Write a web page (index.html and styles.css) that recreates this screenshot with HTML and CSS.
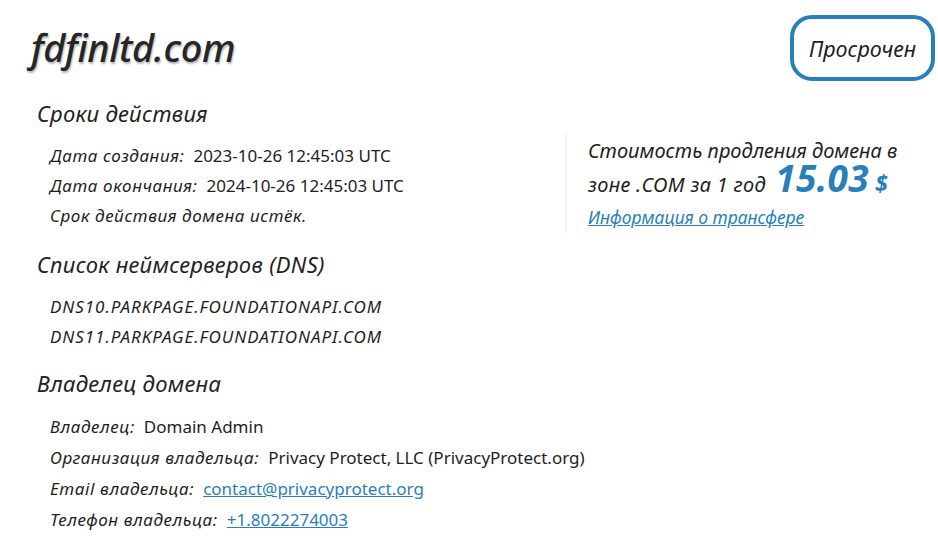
FILE: index.html
```html
<!DOCTYPE html>
<html lang="ru">
<head>
<meta charset="utf-8">
<title>fdfinltd.com</title>
<link rel="stylesheet" href="styles.css">
</head>
<body>
<div class="page">
  <header class="top">
    <h1 class="domain">fdfinltd.com</h1>
    <div class="badge">Просрочен</div>
  </header>
  <div class="main">
    <div class="left">
      <section class="sec">
        <h2 class="heading">Сроки действия</h2>
        <div class="rows">
          <div class="row"><span class="label">Дата создания:</span><span class="value">2023-10-26 12:45:03 UTC</span></div>
          <div class="row"><span class="label">Дата окончания:</span><span class="value">2024-10-26 12:45:03 UTC</span></div>
          <div class="row"><span class="label">Срок действия домена истёк.</span></div>
        </div>
      </section>
      <section class="sec">
        <h2 class="heading">Список неймсерверов (DNS)</h2>
        <div class="rows">
          <div class="row"><span class="label dns">DNS10.PARKPAGE.FOUNDATIONAPI.COM</span></div>
          <div class="row"><span class="label dns">DNS11.PARKPAGE.FOUNDATIONAPI.COM</span></div>
        </div>
      </section>
      <section class="sec">
        <h2 class="heading">Владелец домена</h2>
        <div class="rows owner">
          <div class="row"><span class="label">Владелец:</span><span class="value">Domain Admin</span></div>
          <div class="row"><span class="label">Организация владельца:</span><span class="value">Privacy Protect, LLC (PrivacyProtect.org)</span></div>
          <div class="row"><span class="label">Email владельца:</span><a class="value link" href="#">contact@privacyprotect.org</a></div>
          <div class="row"><span class="label">Телефон владельца:</span><a class="value link" href="#">+1.8022274003</a></div>
        </div>
      </section>
    </div>
    <aside class="panel">
      <div class="pline">Стоимость продления домена в</div>
      <div class="pline second">зоне .COM за 1 год <span class="price">15.03</span><span class="cur">$</span></div>
      <div class="pline"><a class="link plink" href="#">Информация о трансфере</a></div>
    </aside>
  </div>
</div>
</body>
</html>
```

FILE: styles.css
```css
html, body {
  margin: 0;
  padding: 0;
  background: #ffffff;
}
body {
  font-family: "Noto Sans", "Open Sans", sans-serif;
  color: #1e1e1e;
}
.page {
  width: 938px;
  height: 542px;
  overflow: hidden;
  box-sizing: border-box;
  padding: 0 0 0 28px;
}
.top {
  display: flex;
  justify-content: space-between;
  align-items: flex-start;
  height: 98px;
  padding-top: 15px;
  box-sizing: border-box;
}
.domain {
  margin: 8px 0 0 3px;
  font-size: 38px;
  line-height: 48px;
  font-style: italic;
  font-weight: 500;
  color: #262626;
  letter-spacing: -0.4px;
  text-shadow: 1px 2px 2px rgba(0, 0, 0, 0.28);
}
.badge {
  width: 145px;
  height: 66px;
  box-sizing: border-box;
  border: 4px solid #2a7fba;
  border-radius: 22px;
  margin-right: 3px;
  display: flex;
  align-items: center;
  justify-content: center;
  font-size: 21.5px;
  font-style: italic;
  color: #1e1e1e;
}
.main {
  display: flex;
}
.left {
  width: 528px;
  padding-left: 9px;
}
.sec {
  margin-bottom: 18px;
}
.sec:nth-child(2) {
  margin-bottom: 16px;
}
.heading {
  margin: 0;
  font-size: 22px;
  line-height: 30px;
  font-weight: 400;
  font-style: italic;
  letter-spacing: 0.3px;
  color: #222;
}
.rows {
  padding-left: 13px;
  margin-top: 13px;
}
.row {
  height: 30px;
  line-height: 30px;
  font-size: 17px;
  white-space: nowrap;
}
.owner .row {
  height: 31px;
  line-height: 31px;
}
.label {
  font-style: italic;
  letter-spacing: 0.6px;
}
.label.dns {
  letter-spacing: 0.95px;
}
.value {
  margin-left: 9px;
}
.link {
  color: #2a7fba;
  text-decoration: underline;
}
.panel {
  margin-top: 36px;
  height: 99px;
  border-left: 2px solid #f0f0f0;
  padding-left: 21px;
  font-size: 20px;
  font-style: italic;
}
.pline {
  height: 33px;
  line-height: 33px;
  white-space: nowrap;
}
.pline.second {
  letter-spacing: 0.3px;
}
.plink {
  font-size: 17.5px;
}
.price {
  font-size: 37px;
  font-weight: 700;
  color: #2a7fba;
  margin-left: 4px;
  line-height: 20px;
  letter-spacing: 0.3px;
}
.cur {
  font-size: 23px;
  font-weight: 700;
  color: #2a7fba;
  margin-left: 6px;
}
```
